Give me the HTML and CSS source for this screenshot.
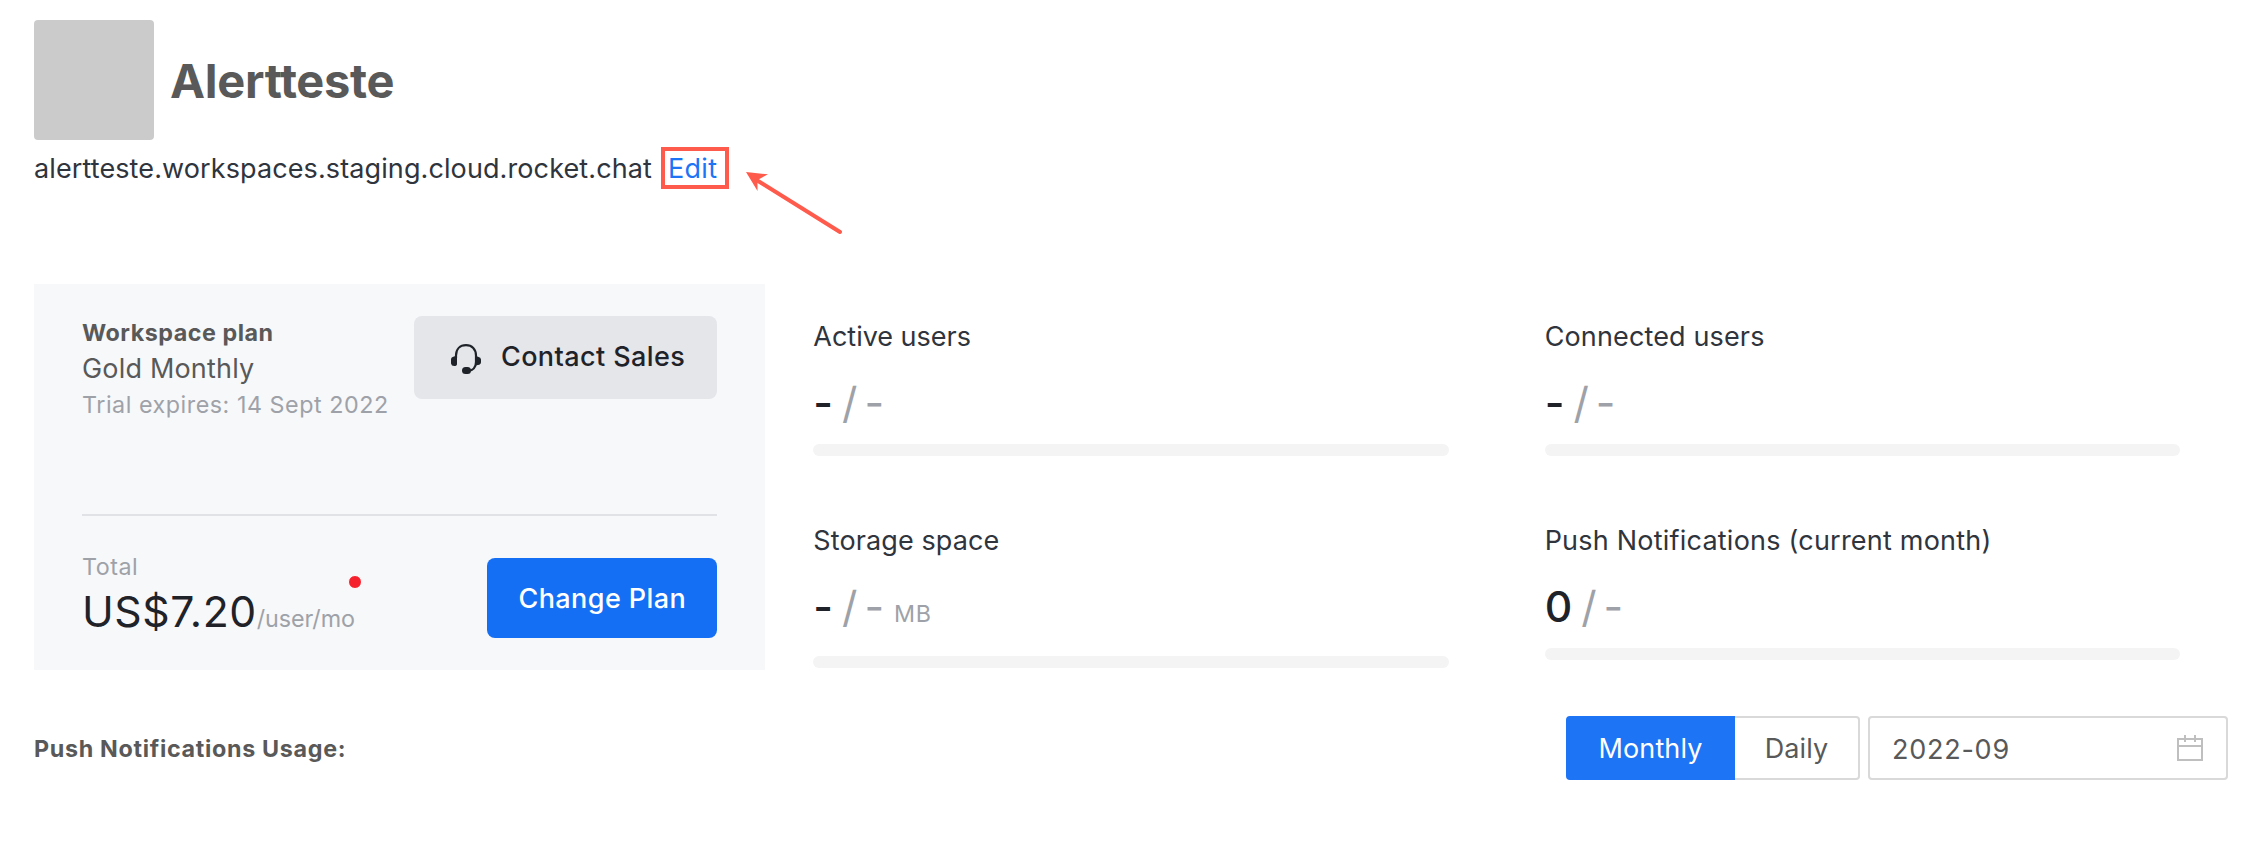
FILE: index.html
```
<!DOCTYPE html>
<html lang="en">
<head>
<meta charset="utf-8">
<title>Alertteste</title>
<link rel="stylesheet" href="styles.css">
</head>
<body>
<main class="page">
  <header class="workspace">
    <div class="avatar"></div>
    <h1 class="workspace-name">Alertteste</h1>
  </header>
  <div class="address">
    <span class="address-url">alertteste.workspaces.staging.cloud.rocket.chat</span>
    <a class="address-edit">Edit</a>
    <svg class="arrow" viewBox="0 0 104 70" width="104" height="70">
      <path d="M12 12.5 98 66" fill="none" stroke="#ff5b4c" stroke-width="4" stroke-linecap="round"/>
      <path d="M4 6 26 8.300 15.500 14 15.500 25Z" fill="#ff5b4c"/>
    </svg>
  </div>

  <section class="overview">
    <div class="plan">
      <div class="plan-top">
        <div class="plan-info">
          <strong class="plan-label">Workspace plan</strong>
          <span class="plan-name">Gold Monthly</span>
          <span class="muted">Trial expires: 14 Sept 2022</span>
        </div>
        <button class="btn btn-contact">
          <svg viewBox="0 0 30 30" width="30" height="30">
            <path d="M5 14V11.500C5 5 9 1.200 15 1.200S25 5 25 11.500V18C25 23 22 26.500 17 27" fill="none" stroke="#1f2329" stroke-width="2.200"/>
            <path d="M6 11.500V20Q6 22 3.200 22T0 19.500V15.500Q0 13 3 12.500ZM24 11.500V21.500L27 21Q30 20.500 30 18V15.500Q30 13.500 27 12.800Z" fill="#1f2329"/>
            <rect x="11" y="23" width="9" height="7" rx="3.500" fill="#1f2329"/>
          </svg>
          <span>Contact Sales</span>
        </button>
      </div>
      <div class="plan-bottom">
        <div class="total">
          <span class="muted">Total</span>
          <div class="price"><span class="price-value">US$7.20</span><span class="price-unit">/user/mo</span><i class="dot"></i></div>
        </div>
        <button class="btn btn-change">Change Plan</button>
      </div>
    </div>

    <div class="stats">
      <div class="stat">
        <div class="stat-label tight">Active users</div>
        <div class="stat-value"><b>-</b><span class="sep">/</span><span>-</span></div>
        <div class="bar"></div>
      </div>
      <div class="stat">
        <div class="stat-label storage">Storage space</div>
        <div class="stat-value"><b>-</b><span class="sep">/</span><span>-</span><small class="unit">MB</small></div>
        <div class="bar bar-low"></div>
      </div>
    </div>

    <div class="stats">
      <div class="stat">
        <div class="stat-label connected">Connected users</div>
        <div class="stat-value"><b>-</b><span class="sep">/</span><span>-</span></div>
        <div class="bar"></div>
      </div>
      <div class="stat">
        <div class="stat-label">Push Notifications (current month)</div>
        <div class="stat-value"><b>0</b><span class="sep">/</span><span>-</span></div>
        <div class="bar"></div>
      </div>
    </div>
  </section>

  <section class="usage">
    <h2 class="usage-title">Push Notifications Usage:</h2>
    <div class="controls">
      <div class="segmented">
        <span class="seg seg-active">Monthly</span>
        <span class="seg seg-last">Daily</span>
      </div>
      <div class="picker">
        <span>2022-09</span>
        <svg viewBox="0 0 26 26" width="26" height="26" fill="none" stroke="#bfbfbf" stroke-width="2">
          <path d="M1 4H25V25H1ZM1 11H25M8 0V7M18 0V7"/>
        </svg>
      </div>
    </div>
  </section>
</main>
</body>
</html>
```

FILE: styles.css
```
* { box-sizing: border-box; }

body {
  margin: 0;
  background: #fff;
  color: #2f343d;
  font: 27px/40px Inter, "Liberation Sans", sans-serif;
  font-feature-settings: "calt" 0, "liga" 0;
}

.page { padding: 20px 30px 0 34px; }

.workspace { display: flex; align-items: center; gap: 16px; height: 120px; }
.avatar { width: 120px; height: 120px; border-radius: 4px; background: #cbcbcb; }
.workspace-name {
  margin: 2px 0 0;
  font-size: 47px;
  line-height: 60px;
  font-weight: 700;
  letter-spacing: -0.31px;
  color: #595959;
}

.address { position: relative; display: flex; align-items: center; height: 56px; }
.address-url { width: 627px; padding-top: 2px; letter-spacing: 0.107px; white-space: nowrap; }
.address-edit {
  width: 68px;
  height: 42px;
  padding-left: 3px;
  border: 4px solid #ff5b4c;
  line-height: 36px;
  letter-spacing: 0.3px;
  color: #1d74f5;
}
.arrow { position: absolute; left: 708px; top: 26px; }

.overview { display: grid; grid-template: 386px / repeat(3, 1fr); margin-top: 88px; }

.plan { display: flex; flex-direction: column; padding: 32px 48px 0; background: #f7f8fa; }
.plan-top { display: flex; justify-content: space-between; height: 200px; border-bottom: 2px solid #e1e2e5; }
.plan-info { display: flex; flex-direction: column; margin-top: -1px; line-height: 36px; white-space: nowrap; }
.plan-label { font-size: 23.3px; font-weight: 700; letter-spacing: 0.52px; color: #595959; }
.plan-name { letter-spacing: 0.18px; color: #595959; }
.muted { font-size: 23.3px; letter-spacing: 0.53px; color: #9ea2a8; }

.btn {
  display: flex;
  align-items: center;
  flex: none;
  border: 0;
  border-radius: 8px;
  font: 450 27px/40px Inter, "Liberation Sans", sans-serif;
  letter-spacing: 0.42px;
  white-space: nowrap;
}
.btn-contact { justify-content: space-between; width: 303px; height: 83px; padding: 0 32px 1px 37px; background: #e4e6ea; color: #1f2329; }
.btn-contact svg { margin-top: 3px; }
.btn-change { justify-content: center; width: 230px; height: 80px; padding: 2px 0 0; background: #156ff5; color: #fff; }

.plan-bottom { display: flex; justify-content: space-between; padding-top: 42px; }
.total { display: flex; flex-direction: column; line-height: 36px; margin-top: -9px; }
.price { position: relative; display: flex; align-items: baseline; width: 273px; line-height: 54px; }
.price-value { font-size: 42.7px; letter-spacing: 0.6px; color: #1f2329; }
.price-unit { font-size: 23.3px; letter-spacing: -0.1px; color: #9ea2a8; }
.dot {
  position: absolute;
  right: -7px;
  top: -10px;
  width: 14px;
  height: 14px;
  border: 1px solid #fff;
  border-radius: 50%;
  background: #f5222d;
}

.stats { display: flex; flex-direction: column; gap: 64px; padding: 32px 48px 0; }
.stat-label { height: 40px; line-height: 42px; letter-spacing: 0.22px; }
.tight { letter-spacing: -0.02px; }
.storage { letter-spacing: 0.1px; }
.connected { letter-spacing: 0.14px; }
.stat-value { display: flex; align-items: baseline; height: 60px; margin-top: 16px; font-size: 42.7px; line-height: 61px; color: #9ea2a8; }
.stat-value b { font-weight: 450; color: #1f2329; }
.sep { margin: 0 7px 0 9px; }
.unit { margin-left: 10px; font-size: 23.3px; letter-spacing: 0.5px; }
.bar { height: 12px; margin-top: 12px; border-radius: 6px; background: #f4f4f4; }
.bar-low { margin-top: 20px; }

.usage { display: flex; align-items: center; justify-content: space-between; height: 64px; margin-top: 46px; }
.usage-title { margin: 2px 0 0; font-size: 23.3px; font-weight: 700; letter-spacing: 0.69px; color: #595959; }
.controls { display: flex; gap: 8px; color: #595959; }
.segmented { display: flex; }
.seg { height: 64px; line-height: 61px; text-align: center; border: 2px solid #d9d9d9; letter-spacing: 0.1px; }
.seg-active { width: 169px; border-color: #1d74f5; border-radius: 4px 0 0 4px; background: #1d74f5; color: #fff; }
.seg-last { width: 125px; border-left: 0; border-radius: 0 4px 4px 0; }
.picker {
  display: flex;
  align-items: center;
  justify-content: space-between;
  width: 360px;
  height: 64px;
  padding: 3px 23px 0 22px;
  border: 2px solid #d9d9d9;
  border-radius: 4px;
  letter-spacing: 0.75px;
}
.picker svg { margin-top: -3px; }
```
